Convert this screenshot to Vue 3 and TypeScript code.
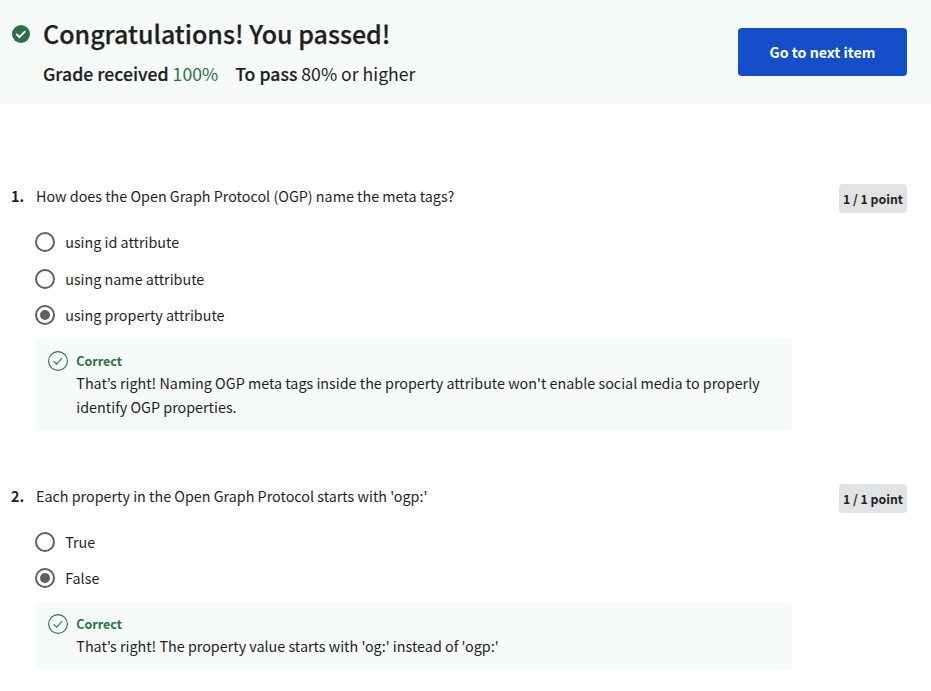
<script setup lang="ts">
interface Question {
  id: number
  prompt: string
  options: string[]
  selected: number
  feedback: string
}

const questions: Question[] = [
  {
    id: 1,
    prompt: 'How does the Open Graph Protocol (OGP) name the meta tags?',
    options: ['using id attribute', 'using name attribute', 'using property attribute'],
    selected: 2,
    feedback:
      "That’s right! Naming OGP meta tags inside the property attribute won't enable social media to properly identify OGP properties.",
  },
  {
    id: 2,
    prompt: "Each property in the Open Graph Protocol starts with 'ogp:'",
    options: ['True', 'False'],
    selected: 1,
    feedback: "That’s right! The property value starts with 'og:' instead of 'ogp:'",
  },
]
</script>

<template>
  <main class="page">
    <header class="banner">
      <svg class="passed" viewBox="0 0 18 18">
        <circle cx="9" cy="9" r="9" />
        <path d="M4.3 9.1 7.4 12 13.4 6.1" />
      </svg>
      <div class="summary">
        <h1>Congratulations! You passed!</h1>
        <p class="grades">
          <span><b>Grade received</b> <em>100%</em></span>
          <span><b>To pass</b> 80% or higher</span>
        </p>
      </div>
      <button class="next" type="button">Go to next item</button>
    </header>

    <section v-for="q in questions" :key="q.id" class="question">
      <span class="number">{{ q.id }}.</span>
      <div class="body">
        <p class="prompt">{{ q.prompt }}</p>
        <ul class="options">
          <li v-for="(option, i) in q.options" :key="option">
            <svg class="radio" viewBox="0 0 20 20">
              <circle class="ring" cx="10" cy="10" r="9" />
              <circle v-if="i === q.selected" class="dot" cx="10" cy="10" r="5" />
            </svg>
            <span>{{ option }}</span>
          </li>
        </ul>
        <div class="feedback">
          <svg class="check" viewBox="0 0 20 20">
            <circle cx="10" cy="10" r="9.4" />
            <path d="M5.6 10.1 8.6 13.1 14.2 7" />
          </svg>
          <div>
            <strong>Correct</strong>
            <p>{{ q.feedback }}</p>
          </div>
        </div>
      </div>
      <span class="points">1 / 1 point</span>
    </section>
  </main>
</template>

<style>
body {
  background: #fff;
}
</style>

<style scoped>
.page {
  height: 691px;
  overflow: hidden;
  color: #1f1f1f;
  font: 14.34px/24px 'Noto Sans CJK KR', sans-serif;
}
h1, p, ul {
  margin: 0;
  padding: 0;
}
.banner {
  display: flex;
  align-items: flex-start;
  box-sizing: border-box;
  height: 104px;
  margin-bottom: 80px;
  padding: 0 24px 0 12px;
  background: #f6faf9;
}
.passed {
  width: 18px;
  height: 18px;
  margin: 25px 13px 0 0;
  fill: #2c7145;
}
.passed path {
  fill: none;
  stroke: #fff;
  stroke-width: 2;
}
.summary {
  flex: 1;
  padding-top: 15px;
}
h1 {
  font-size: 25px;
  line-height: 36px;
  font-weight: 500;
  -webkit-text-stroke: 0.25px currentColor;
}
.grades {
  display: flex;
  gap: 17px;
  margin-top: 11px;
  font-size: 17.65px;
}
b {
  font-weight: 500;
  -webkit-text-stroke: 0.2px currentColor;
}
em {
  color: #2a7345;
  font-style: normal;
}
.next {
  width: 169px;
  height: 48px;
  margin-top: 28px;
  border: 0;
  border-radius: 4px;
  background: #154ec9;
  color: #fff;
  font: 700 14.2px/24px 'Noto Sans CJK KR', sans-serif;
}
.question {
  display: flex;
  align-items: flex-start;
  margin-bottom: 53px;
  padding: 0 24px 0 11px;
}
.number {
  width: 25px;
  font-weight: 700;
}
.body {
  width: 756px;
}
.options {
  display: flex;
  flex-direction: column;
  gap: 12.5px;
  margin: 22px 0 11.8px -1px;
  list-style: none;
}
.options li {
  display: flex;
  gap: 10.2px;
  align-items: center;
}
.radio {
  width: 20px;
  height: 20px;
}
.ring {
  fill: none;
  stroke: #5f5f5f;
  stroke-width: 2;
}
.dot {
  fill: #5f5f5f;
}
.feedback {
  display: flex;
  gap: 8.3px;
  padding: 12px 16px 12px 12px;
  background: #f6faf9;
}
.check {
  flex: none;
  width: 20px;
  height: 20px;
  fill: none;
  stroke: #2a7345;
  stroke-width: 1.1;
}
strong {
  display: block;
  color: #2a7345;
  font-size: 12.5px;
  line-height: 20px;
}
.points {
  box-sizing: border-box;
  width: 68px;
  height: 29px;
  margin-left: auto;
  padding-top: 1px;
  border-radius: 4px;
  background: #e1e3e4;
  font-size: 12.3px;
  font-weight: 700;
  line-height: 29px;
  text-align: center;
}
</style>
